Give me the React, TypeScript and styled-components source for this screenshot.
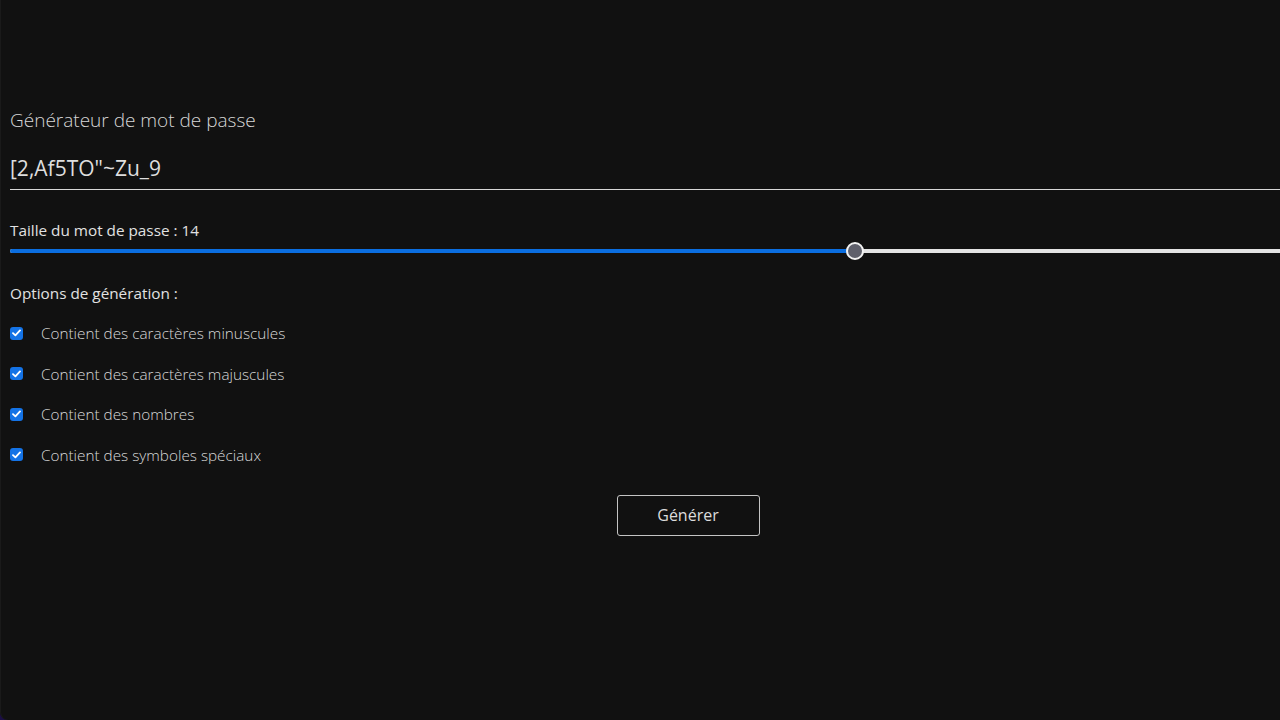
import { useState } from "react"
import styled, { createGlobalStyle } from "styled-components"

const GlobalStyle = createGlobalStyle`
  html, body {
    margin: 0;
    padding: 0;
    background: #1b0f45;
    overflow: hidden;
  }
  body {
    font-family: "Open Sans", "Noto Sans", sans-serif;
    color: #dcdcdc;
  }
`

const Panel = styled.main`
  box-sizing: border-box;
  width: 1376px;
  min-height: 720px;
  padding: 106px 10px 0 10px;
  background: #111111;
  border-bottom-left-radius: 8px;
  box-shadow: inset 1px 0 0 #1a1a1a;
  display: flex;
  flex-direction: column;
`

const Title = styled.h1`
  margin: 0;
  font-size: 19px;
  line-height: 28px;
  font-weight: 300;
  color: #d6d6d6;
`

const PasswordField = styled.input`
  box-sizing: border-box;
  margin-top: 16px;
  height: 40px;
  width: 100%;
  padding: 0 0 4px 0;
  border: none;
  border-bottom: 1px solid #d8d8d8;
  background: transparent;
  color: #dedede;
  font-family: inherit;
  font-size: 21px;
  outline: none;
`

const Label = styled.div<{ $top: number }>`
  margin-top: ${(p) => p.$top}px;
  font-size: 15.3px;
  line-height: 19px;
  color: #e2e2e2;
`

const SliderWrap = styled.div`
  position: relative;
  height: 20px;
  margin-top: 1px;
`

const Track = styled.div`
  position: absolute;
  left: 0;
  right: 0;
  top: 8px;
  height: 4px;
  border-radius: 2px;
  background: #e4e4e4;
`

const Fill = styled.div`
  position: absolute;
  left: 0;
  top: 8px;
  height: 4px;
  border-radius: 2px;
  background: #0b6ee0;
`

const Thumb = styled.div`
  position: absolute;
  top: 1px;
  width: 18px;
  height: 18px;
  box-sizing: border-box;
  border-radius: 50%;
  border: 2px solid #f2f2f2;
  background: #5f606b;
`

const RangeInput = styled.input`
  position: absolute;
  inset: 0;
  width: 100%;
  margin: 0;
  opacity: 0;
  cursor: pointer;
`

const OptionList = styled.div`
  margin-top: 20px;
  display: flex;
  flex-direction: column;
  gap: 20.5px;
`

const OptionRow = styled.label`
  display: flex;
  align-items: center;
  gap: 18px;
  height: 20px;
  font-size: 15.3px;
  font-weight: 300;
  color: #d8d8d8;
  cursor: pointer;
`

const Box = styled.span<{ $on: boolean }>`
  width: 13px;
  height: 13px;
  border-radius: 3px;
  background: ${(p) => (p.$on ? "#1473e6" : "transparent")};
  border: ${(p) => (p.$on ? "none" : "1px solid #8a8a8a")};
  box-sizing: border-box;
  display: flex;
  align-items: center;
  justify-content: center;
  flex-shrink: 0;
`

const HiddenCheck = styled.input`
  display: none;
`

const ButtonRow = styled.div`
  margin-top: 30px;
  display: flex;
  justify-content: center;
`

const GenerateButton = styled.button`
  width: 143px;
  height: 41px;
  background: transparent;
  border: 1px solid #c4c4c4;
  border-radius: 3px;
  color: #dcdcdc;
  font-family: inherit;
  font-size: 16px;
  cursor: pointer;
`

const MIN = 4
const MAX = 20

const optionDefs = [
  { key: "lower", label: "Contient des caractères minuscules", chars: "abcdefghijklmnopqrstuvwxyz" },
  { key: "upper", label: "Contient des caractères majuscules", chars: "ABCDEFGHIJKLMNOPQRSTUVWXYZ" },
  { key: "numbers", label: "Contient des nombres", chars: "0123456789" },
  { key: "symbols", label: "Contient des symboles spéciaux", chars: "!\"#$%&'()*+,-./:;<=>?@[]^_`{|}~" },
]

export default function App() {
  const [length, setLength] = useState(14)
  const [password, setPassword] = useState('[2,Af5TO"~Zu_9')
  const [opts, setOpts] = useState<Record<string, boolean>>({
    lower: true,
    upper: true,
    numbers: true,
    symbols: true,
  })

  // same placement as a native range thumb: 9px inset on both ends
  const f = (length - MIN) / (MAX - MIN)
  const center = `calc(9px + ${f} * (100% - 18px))`

  const generate = () => {
    const pool = optionDefs.filter((o) => opts[o.key]).map((o) => o.chars).join("")
    if (!pool) return
    let out = ""
    for (let i = 0; i < length; i++) out += pool[Math.floor(Math.random() * pool.length)]
    setPassword(out)
  }

  return (
    <>
      <GlobalStyle />
      <Panel>
        <Title>Générateur de mot de passe</Title>
        <PasswordField value={password} readOnly />
        <Label $top={31}>Taille du mot de passe : {length}</Label>
        <SliderWrap>
          <Track />
          <Fill style={{ width: center }} />
          <Thumb style={{ left: `calc(${f} * (100% - 18px))` }} />
          <RangeInput
            type="range"
            min={MIN}
            max={MAX}
            value={length}
            onChange={(e) => setLength(Number(e.target.value))}
          />
        </SliderWrap>
        <Label $top={23}>Options de génération :</Label>
        <OptionList>
          {optionDefs.map((o) => (
            <OptionRow key={o.key}>
              <HiddenCheck
                type="checkbox"
                checked={opts[o.key]}
                onChange={() => setOpts({ ...opts, [o.key]: !opts[o.key] })}
              />
              <Box $on={opts[o.key]}>
                {opts[o.key] && (
                  <svg width="9" height="8" viewBox="0 0 9 8">
                    <path d="M1 4.2 L3.4 6.4 L8 1.4" fill="none" stroke="#fff" strokeWidth="1.8" strokeLinecap="round" strokeLinejoin="round" />
                  </svg>
                )}
              </Box>
              {o.label}
            </OptionRow>
          ))}
        </OptionList>
        <ButtonRow>
          <GenerateButton onClick={generate}>Générer</GenerateButton>
        </ButtonRow>
      </Panel>
    </>
  )
}
